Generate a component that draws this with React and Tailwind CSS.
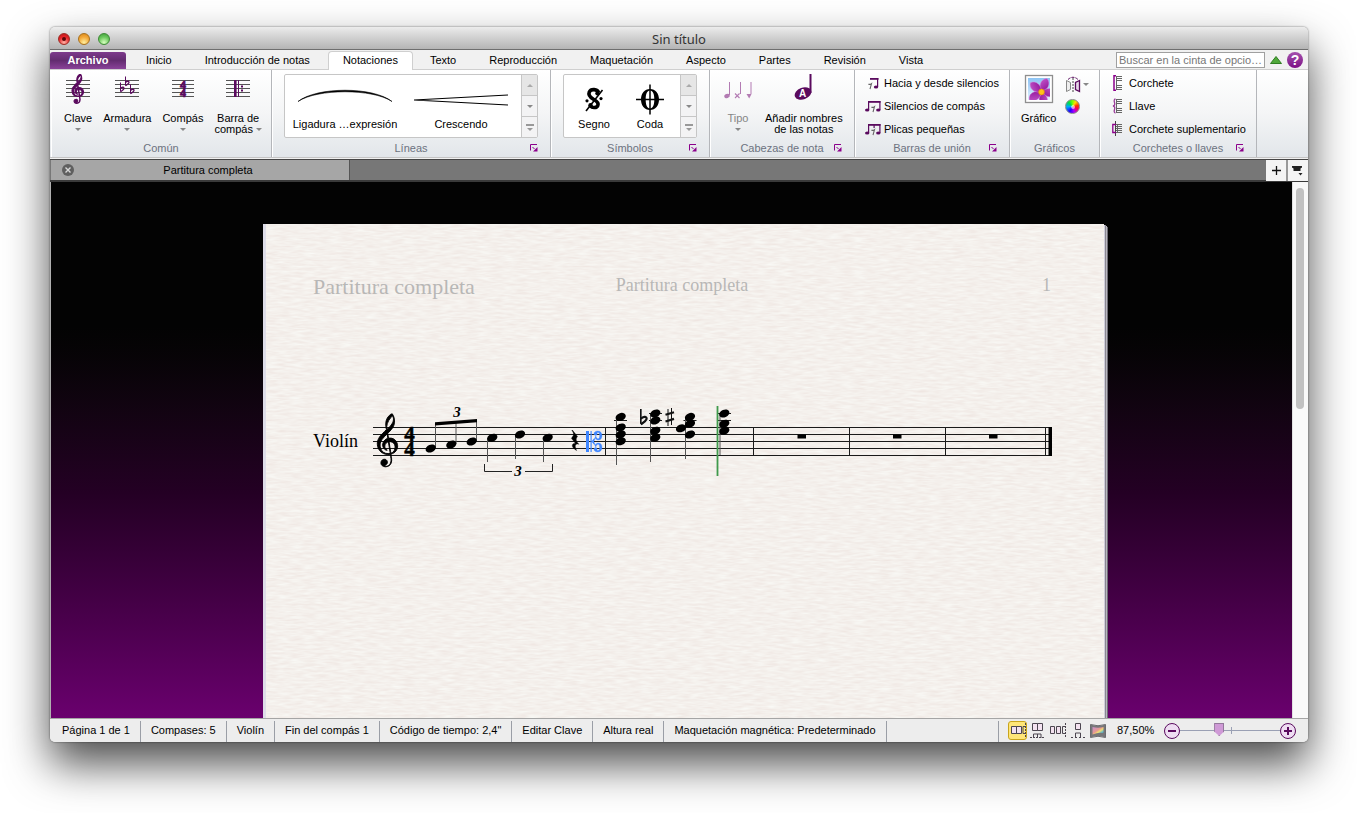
import React from "react";

const TREBLE =
  "m12.049 3.5296c0.305 3.1263-2.019 5.6563-4.0772 7.7014-0.9349 0.897-0.155 0.148-0.6437 0.594-0.1022-0.479-0.2986-1.731-0.2802-2.11 0.1304-2.6939 2.3198-6.5875 4.2381-8.0236 0.309 0.5767 0.563 0.6231 0.763 1.8382zm0.651 16.142c-1.232-0.906-2.85-1.144-4.3336-0.885-0.1913-1.255-0.3827-2.51-0.574-3.764 2.3506-2.329 4.9066-5.0322 5.0406-8.5394 0.059-2.232-0.276-4.6714-1.678-6.4836-1.7004 0.12823-2.8995 2.156-3.8019 3.4165-1.4889 2.6705-1.1414 5.9169-0.57 8.7965-0.8094 0.952-1.9296 1.743-2.7274 2.734-2.3561 2.308-4.4085 5.43-4.0046 8.878 0.18332 3.334 2.5894 6.434 5.8702 7.227 1.2457 0.315 2.5639 0.346 3.8241 0.099 0.2199 2.25 1.0266 4.629 0.0925 6.813-0.7007 1.598-2.7875 3.004-4.3325 2.192-0.5994-0.316-0.1137-0.051-0.478-0.252 1.0698-0.257 1.9996-1.036 2.26-1.565 0.8378-1.464-0.3998-3.639-2.1554-3.358-2.262 0.046-3.1904 3.14-1.7356 4.685 1.3468 1.52 3.833 1.312 5.4301 0.318 1.8125-1.18 2.0395-3.544 1.8325-5.562-0.07-0.678-0.403-2.67-0.444-3.387 0.697-0.249 0.209-0.059 1.193-0.449 2.66-1.053 4.357-4.259 3.594-7.122-0.318-1.469-1.044-2.914-2.302-3.792zm0.561 5.757c0.214 1.991-1.053 4.321-3.079 4.96-0.136-0.795-0.172-1.011-0.2626-1.475-0.4822-2.46-0.744-4.987-1.116-7.481 1.6246-0.168 3.4576 0.543 4.0226 2.184 0.244 0.577 0.343 1.197 0.435 1.812zm-5.1486 5.196c-2.5441 0.141-4.9995-1.595-5.6343-4.081-0.749-2.153-0.5283-4.63 0.8207-6.504 1.1151-1.702 2.6065-3.105 4.0286-4.543 0.183 1.127 0.366 2.254 0.549 3.382-2.9906 0.782-5.0046 4.725-3.215 7.451 0.5324 0.764 1.9765 2.223 2.7655 1.634-1.102-0.683-2.0033-1.859-1.8095-3.227-0.0821-1.282 1.3699-2.911 2.6513-3.198 0.4384 2.869 0.9413 6.073 1.3797 8.943-0.5054 0.1-1.0211 0.143-1.536 0.143z";

const SERIF = "'Liberation Serif', serif";
const PURPLE = "#5a0a5e";

/* ---------- ribbon icons ---------- */

function Staff({ w = 24 }) {
  return (
    <g stroke="#555" strokeWidth="1">
      {[6.5, 10.5, 14.5, 18.5, 22.5].map((y) => (
        <line key={y} x1="0" x2={w} y1={y} y2={y} />
      ))}
    </g>
  );
}

function ClefIcon() {
  return (
    <svg width="24" height="30" viewBox="0 0 24 30" aria-hidden="true">
      <Staff />
      <path d={TREBLE} transform="translate(6 0) scale(0.76 0.72)" fill={PURPLE} stroke={PURPLE} strokeWidth="1.4" />
    </svg>
  );
}

function Flat({ x, y, s = 1, fill = "none", color = PURPLE }) {
  return (
    <g transform={`translate(${x} ${y}) scale(${s})`} stroke={color} fill={fill}>
      <line x1="0.5" y1="0" x2="0.5" y2="9" strokeWidth="1" />
      <path d="M.5 6C2 4 4.6 4.6 3.9 6.3 3.4 7.6 1.8 8.4.5 9.3" strokeWidth="1.3" />
    </g>
  );
}

function KeyIcon() {
  return (
    <svg width="24" height="30" viewBox="0 0 24 30" aria-hidden="true">
      <Staff />
      <Flat x={5} y={8.5} />
      <Flat x={10} y={2.5} />
      <Flat x={15} y={10.5} />
    </svg>
  );
}

function MeterIcon() {
  return (
    <svg width="22" height="30" viewBox="0 0 22 30" aria-hidden="true">
      <Staff w={22} />
      <text fill={PURPLE} fontFamily={SERIF} fontWeight="bold" fontSize="12" textAnchor="middle" stroke={PURPLE} strokeWidth="0.7">
        <tspan x="11" y="14.5">4</tspan>
        <tspan x="11" y="22.5">4</tspan>
      </text>
    </svg>
  );
}

function BarIcon() {
  return (
    <svg width="24" height="30" viewBox="0 0 24 30" aria-hidden="true">
      <Staff />
      <rect x="8" y="6" width="2.600" height="17" fill={PURPLE} />
      <rect x="12" y="6" width="1" height="17" fill={PURPLE} />
      <rect x="15" y="11.5" width="2" height="2" fill={PURPLE} />
      <rect x="15" y="15.5" width="2" height="2" fill={PURPLE} />
    </svg>
  );
}

function NoteheadsIcon() {
  return (
    <svg width="30" height="30" viewBox="0 0 30 30" fill="#b37bb3" stroke="#b37bb3" aria-hidden="true">
      <ellipse cx="4" cy="22" rx="2.8" ry="2" stroke="none" transform="rotate(-20 4 22)" />
      <line x1="6.5" y1="8" x2="6.5" y2="21" />
      <path d="M12 19.500l4.500 4.500M16.500 19.500L12 24" strokeWidth="1.100" />
      <line x1="17.500" y1="8" x2="17.500" y2="20" />
      <path d="M23.500 20h5l-2.300 4.500z" stroke="none" />
      <line x1="28" y1="8" x2="28" y2="20" />
    </svg>
  );
}

function NameNoteIcon() {
  return (
    <svg width="20" height="30" viewBox="0 0 20 30" aria-hidden="true">
      <rect x="15.500" y="0" width="2" height="19" fill={PURPLE} />
      <ellipse cx="9" cy="19.500" rx="8.600" ry="5.800" fill={PURPLE} transform="rotate(-20 9 19.500)" />
      <text x="8.500" y="23" textAnchor="middle" fontSize="10" fontWeight="bold" fill="#fff" fontFamily="'Liberation Sans', sans-serif">A</text>
    </svg>
  );
}

function BeamIcon({ kind }) {
  return (
    <svg width="17" height="14" viewBox="0 0 17 14" aria-hidden="true">
      <g fill={PURPLE}>
        {kind === 0 && (
          <>
            <rect x="5" y="2" width="8.500" height="1.800" />
            <rect x="12" y="2" width="1.200" height="9" />
            <ellipse cx="11" cy="11" rx="2.200" ry="1.600" />
          </>
        )}
        {kind > 0 && (
          <>
            <rect x="3" y="2" width="12.500" height="1.800" />
            <rect x="3" y="2" width="1.200" height="9" />
            <ellipse cx="2.200" cy="11" rx="2.200" ry="1.600" />
            <rect x="14.300" y="2" width="1.200" height="9" />
            <ellipse cx="13.300" cy="11" rx="2.200" ry="1.600" />
            {kind === 2 && <rect x="8.500" y="3" width="1.200" height="3" />}
          </>
        )}
      </g>
      <path
        d={kind === 0 ? "M3.500 8q1.200 1 3-.3l-1.500 5.500" : "M6.500 8q1.200 1 3-.3l-1.500 5.500"}
        fill="none"
        stroke="#666"
        strokeWidth="1.100"
      />
    </svg>
  );
}

function FlowerIcon() {
  return (
    <svg width="30" height="30" viewBox="0 0 30 30" aria-hidden="true">
      <defs>
        <linearGradient id="sky" x1="0" y1="0" x2="0" y2="1">
          <stop offset="0" stopColor="#8cc4f4" />
          <stop offset="1" stopColor="#e3f1ff" />
        </linearGradient>
        <linearGradient id="petal" x1="0" y1="0" x2="1" y2="1">
          <stop offset="0" stopColor="#c45acb" />
          <stop offset="1" stopColor="#8d0d95" />
        </linearGradient>
        <clipPath id="photo"><rect x="4" y="4" width="22" height="22" /></clipPath>
      </defs>
      <rect x="1.500" y="1.500" width="27" height="27" fill="#fff" stroke="#8f8f8f" strokeWidth="1.300" />
      <rect x="4" y="4" width="22" height="22" fill="url(#sky)" />
      <g clipPath="url(#photo)">
        {[22, 94, 166, 238, 310].map((a) => (
          <path key={a} d="M17.500 18C12 13.500 12 6 17.500 3.500 23 6 23 13.500 17.500 18z" fill="url(#petal)" stroke="#d78adc" strokeWidth="0.400" transform={`rotate(${a} 17.500 18)`} />
        ))}
        <circle cx="17.500" cy="18" r="2.900" fill="#ffc21a" stroke="#e08a00" strokeWidth="0.600" />
      </g>
    </svg>
  );
}

function FlipIcon() {
  return (
    <svg width="16" height="17" viewBox="0 0 16 17" fill="none" aria-hidden="true">
      <path d="M3 3.500Q8-1 13 3.500" stroke={PURPLE} strokeDasharray="3 1" />
      <path d="M1.500 4.500l4 2v7l-4 2z" fill="#eee" stroke="#888" />
      <path d="M14.500 4.500l-4 2v7l4 2z" fill="#e8d8ea" stroke={PURPLE} strokeWidth="1.300" />
      <path d="M8 2v15" stroke="#444" strokeDasharray="2 1" />
    </svg>
  );
}

function WheelIcon() {
  return (
    <span className="flex size-[15px] rounded-full border border-[#888] bg-[conic-gradient(#7f0,#fd0_10%,#f30_22%,#f05_32%,#a0f_45%,#20f_58%,#0af_74%,#0d4_88%,#7f0)]">
      <span className="m-auto size-[4px] rounded-full bg-white/60" />
    </span>
  );
}

function BracketIcon({ kind }) {
  const lines = kind === 2 ? [3.5, 5.5, 7.5, 9.5, 11.5] : [1.500, 3.500, 5.500, 10.500, 12.500, 14.500];
  return (
    <svg width="12" height="16" viewBox="0 0 12 16" fill="none" aria-hidden="true">
      <g stroke="#666">
        {lines.map((y) => <path key={y} d={`M4 ${y}h6`} />)}
        <path d={kind === 2 ? "M5.500 3v9" : "M4.500 1v14"} />
      </g>
      {kind === 0 && <path d="M4 .800H2v14.400h2" stroke="#8b008b" strokeWidth="1.500" />}
      {kind === 1 && <path d="M3.500 1q-2 .500-1 3.500t-1.500 3.500q2.500 .500 1.500 3.500t1 3.500" stroke="#9a3c9a" strokeWidth="1.300" />}
      {kind === 2 && (
        <>
          <path d="M3.500 0v15" stroke="#444" />
          <path d="M4 3.500H.800v8H4" stroke="#8b008b" strokeWidth="1.300" />
        </>
      )}
    </svg>
  );
}

function Caret() {
  return <span className="inline-block border-x-[3px] border-t-[3px] border-x-transparent border-t-[#888]" />;
}

/* ---------- ribbon pieces ---------- */

function Group({ label, width, launcher, children }) {
  return (
    <section aria-label={label} className={`flex flex-col border-r border-[#b4b6ba] shadow-[inset_1px_0_0_#fff] ${width}`}>
      <div className="flex h-[71px] pt-1">{children}</div>
      <div className="grid grid-cols-[24px_1fr_24px] items-center leading-[14px] text-[#6c7280]">
        <span />
        <span className="text-center whitespace-nowrap">{label}</span>
        {launcher && (
          <button aria-label={`Opciones de ${label}`} className="pl-1">
            <svg width="8" height="8" viewBox="0 0 8 8" aria-hidden="true">
              <path d="M.500 6.500V.500H7" fill="none" stroke="#8b008b" />
              <path d="M2.500 3l2 2" stroke="#8b008b" />
              <path d="M7.500 3v4.500H3z" fill="#8b008b" />
            </svg>
          </button>
        )}
      </div>
    </section>
  );
}

function BigButton({ icon, lines, caret, className = "" }) {
  return (
    <button className={`flex flex-col items-center leading-[11px] whitespace-nowrap ${className}`}>
      <span className="flex h-[39px]">{icon}</span>
      {lines.map((l, i) => (
        <span key={l} className="flex items-center gap-[3px]">
          {l}
          {caret === "inline" && i === lines.length - 1 && <Caret />}
        </span>
      ))}
      {caret === "below" && <span className="flex h-[11px] items-center"><Caret /></span>}
    </button>
  );
}

function Gallery({ items }) {
  return (
    <div className="mx-3 flex h-[64px] flex-1 rounded-[2px] border border-[#c6c6c6] bg-white">
      <div className="flex flex-1 px-[2px]">
        {items.map(([name, art]) => (
          <button key={name} className="flex flex-1 flex-col items-center whitespace-nowrap">
            <span className="flex h-[42px] items-end">{art}</span>
            <span className="leading-[14px]">{name}</span>
          </button>
        ))}
      </div>
      <div className="flex w-[16px] flex-col divide-y divide-[#c6c6c6] border-l border-[#c6c6c6] bg-[#f3f3f4]">
        <button aria-label="Subir" className="flex flex-1 items-center justify-center bg-[#e6e6e6]">
          <span className="border-x-[3px] border-b-[3px] border-x-transparent border-b-[#aaa]" />
        </button>
        <button aria-label="Bajar" className="flex flex-1 items-center justify-center"><Caret /></button>
        <button aria-label="Más" className="flex flex-1 flex-col items-center justify-center gap-[2px]">
          <span className="h-[2px] w-2 bg-[#999]" />
          <span className="border-x-[3px] border-t-[3px] border-x-transparent border-t-[#999]" />
        </button>
      </div>
    </div>
  );
}

function ListButtons({ items, className }) {
  return (
    <div className={`flex flex-col gap-[5px] ${className}`}>
      {items.map(([name, icon]) => (
        <button key={name} className="flex h-[18px] items-center whitespace-nowrap">
          {icon}
          <span>{name}</span>
        </button>
      ))}
    </div>
  );
}

const slur = (
  <svg width="96" height="42" viewBox="0 0 96 42" aria-hidden="true">
    <path d="M1 26.500C20 11.500 76 11.500 95 26.500 76 13.500 20 13.500 1 26.500z" fill="#000" stroke="#000" strokeWidth="0.600" />
  </svg>
);
const hairpin = (
  <svg width="96" height="42" viewBox="0 0 96 42" aria-hidden="true">
    <path d="M95 20L1 25l94 5" fill="none" stroke="#000" strokeWidth="1.100" />
  </svg>
);
const segno = (
  <svg width="20" height="42" viewBox="0 0 20 42" aria-hidden="true">
    <path d="M14.500 17.500C13.500 14 7 13.500 5.300 17c-1.500 3.500 1 5.500 4.500 7.500 3.500 1.900 5 3.700 4 6-1 2.500-5.500 2.800-7.300.500" fill="none" stroke="#000" strokeWidth="3.600" />
    <circle cx="13.500" cy="18.300" r="2.200" />
    <circle cx="6.500" cy="30.200" r="2.200" />
    <path d="M18.500 15L2 36" stroke="#000" strokeWidth="1.600" />
    <circle cx="3" cy="25.800" r="1.600" />
    <circle cx="17" cy="23.600" r="1.600" />
  </svg>
);
const coda = (
  <svg width="28" height="42" viewBox="0 0 28 42" aria-hidden="true">
    <path fillRule="evenodd" d="M14 14c5.500 0 9 4.500 9 10.500S19.500 35 14 35s-9-4.500-9-10.500S8.500 14 14 14zm0 1.500c-3 0-4.300 3.500-4.300 9s1.300 9 4.300 9 4.300-3.500 4.300-9-1.300-9-4.300-9z" />
    <path d="M14 9.500v30M0 24.500h28" stroke="#000" strokeWidth="1.500" />
  </svg>
);

/* ---------- score ---------- */

const NOTES = [
  [430.7, 448.5], [451.3, 444.5], [471.7, 441.5], [492.3, 437.7], [520, 434.5], [547.7, 437.7],
  [620.7, 416.9], [620.7, 427.5], [620.7, 434.5], [620.7, 441.3],
  [655.3, 413.5], [655.3, 420.5], [655.3, 430.7], [655.3, 437.7],
  [690, 416.9], [690, 423.7], [681, 428.3], [690, 434.5],
  [724.3, 413.5], [724.3, 423.7], [724.3, 430.7],
];
const STEMS = [
  [435.5, 448, 424], [456, 444, 422], [476.5, 441, 420],
  [487.5, 438, 462], [515.5, 435, 459], [543.5, 438, 462],
  [616.5, 417, 465], [650.5, 414, 462], [685.5, 417, 459], [720, 414, 455],
];
const LEDGERS = [[620.5, 420.5], [655.5, 420.5], [655.5, 413.5], [690, 420.5], [724.5, 420.5], [724.5, 413.5]];

function CClefHalf() {
  return (
    <path
      d="M593 441.500C594.500 441 595 439.500 595.200 438c.800 1.500 2 2 3.200 2 2.600 0 3.600-2 3.600-4.500s-1.500-4.500-4.300-4.500c-2 0-3.700 1-3.700 2.700 0 1.200.800 1.700 1.600 1.700 1 0 1.500-.700 1.400-1.600-.100-.700.300-1.300 1-1.300 1.300 0 1.600 1.200 1.600 3s-.300 3.200-1.500 3.200c-1.300 0-1.900-1.200-2.200-2.900z"
      fill="#3f86ff"
      stroke="#3f86ff"
      strokeWidth="0.300"
    />
  );
}

function Score() {
  return (
    <svg width="690" height="80" viewBox="370 400 690 80" role="img" aria-label="Pentagrama de violín">
      <g stroke="#1a1a1a" strokeWidth="1">
        {[427.5, 434.5, 441.5, 448.5, 455.5].map((y) => <line key={y} x1="373" x2="1052" y1={y} y2={y} />)}
        {[605.5, 753.5, 849.5, 945.5, 1045.5].map((x) => <line key={x} x1={x} x2={x} y1="427" y2="456" />)}
        {LEDGERS.map(([x, y]) => <line key={`${x}-${y}`} x1={x - 6.5} x2={x + 6.5} y1={y} y2={y} />)}
      </g>
      <g stroke="#555" strokeWidth="1">
        {STEMS.map(([x, a, b]) => <line key={x} x1={x} x2={x} y1={a} y2={b} />)}
      </g>
      <rect x="1048.500" y="427" width="3.500" height="29" />
      {[797.5, 893, 989].map((x) => <rect key={x} x={x} y="434.500" width="8.500" height="4" />)}
      <path d={TREBLE} transform="translate(377.300 413.800) scale(1.340 1.300)" stroke="#000" strokeWidth="0.700" />
      <text fontFamily={SERIF} fontWeight="bold" fontSize="21" textAnchor="middle" stroke="#000" strokeWidth="0.500">
        <tspan x="409.500" y="441">4</tspan>
        <tspan x="409.500" y="455.500">4</tspan>
      </text>
      {NOTES.map(([x, y]) => (
        <ellipse key={`${x}-${y}`} cx={x} cy={y} rx="5.300" ry="3.800" transform={`rotate(-22 ${x} ${y})`} />
      ))}
      <polygon points="435,422.300 477,419 477,422.300 435,425.600" />
      <g fontFamily={SERIF} fontWeight="bold" fontStyle="italic" fontSize="15" textAnchor="middle">
        <text x="457" y="417">3</text>
        <text x="518" y="476">3</text>
      </g>
      <path d="M484.500 464v7.500H512M525 471.500h27.500V464" fill="none" stroke="#222" />
      <path d="M572.300 430l5.200 6.500c-2.300 2.700-1.300 4.700 1.400 7.800-3.200-1.200-5 1-2.300 6.200-5.600-3.200-5.400-7.300-1.200-7.300l-4-5c2.800-3 2.800-4.700.5-7.600z" stroke="#000" strokeWidth="0.400" />
      <g>
        <rect x="586" y="431" width="3" height="21" fill="#3f86ff" />
        <rect x="590.500" y="431" width="1.200" height="21" fill="#3f86ff" />
        <path d="M591.500 441.500l2.500-3v6z" fill="#3f86ff" />
        <CClefHalf />
        <g transform="translate(0 883) scale(1 -1)"><CClefHalf /></g>
      </g>
      <Flat x={640} y={409} s={1.65} color="#111" />
      <g stroke="#111">
        <path d="M668 409v17M671.500 408v17" strokeWidth="1" />
        <path d="M665.500 414.800l8.500-2.600M665.500 421.500l8.500-2.600" strokeWidth="2.200" />
      </g>
      <line x1="717.500" x2="717.500" y1="406" y2="476" stroke="#3f9a4c" strokeWidth="1.800" />
    </svg>
  );
}

function PaperTexture() {
  return (
    <svg className="absolute inset-0 size-full" aria-hidden="true">
      <filter id="paper" x="0" y="0" width="100%" height="100%" colorInterpolationFilters="sRGB">
        <feTurbulence type="fractalNoise" baseFrequency="0.08 0.45" numOctaves="2" seed="7" />
        <feColorMatrix values="0.050 0 0 0 0.932  0.095 0 0 0 0.893  0.100 0 0 0 0.875  0 0 0 0 1" />
      </filter>
      <rect width="100%" height="100%" filter="url(#paper)" />
    </svg>
  );
}

/* ---------- status bar ---------- */

const STATUS = [
  "Página 1 de 1", "Compases: 5", "Violín", "Fin del compás 1", 'Código de tiempo: 2,4"',
  "Editar Clave", "Altura real", "Maquetación magnética: Predeterminado",
];

const VIEWS = [
  ["Panorama de páginas", <><path d="M2.500 4.500h5v7h-5zM7.500 4.500h5v7h-5z" fill="#f3e2f0" /><path d="M16 4.500h-2v7h2" /><path d="M16.500 1v14" strokeDasharray="2 1" /></>],
  ["Páginas verticales", <><path d="M3.500 1.500h5v7h-5zM8.500 1.500h5v7h-5z" fill="#f3e2f0" /><path d="M4.500 16v-4h7.500v4M8.500 12v4" /><path d="M1 15.500h15" strokeDasharray="2 1" /></>],
  ["Páginas horizontales", <><path d="M1.500 4.500h4v7h-4zM7.500 4.500h4v7h-4z" fill="#f3e2f0" /><path d="M16 4.500h-2.500v7H16" /><path d="M16.500 1v14" strokeDasharray="2 1" /></>],
  ["Página única", <><path d="M6.500 1.500h5v6h-5z" fill="#f3e2f0" /><path d="M6.500 15v-4h5v4" /><path d="M2 15.500h14" strokeDasharray="2 2" /></>],
];

function StatusBar() {
  return (
    <footer className="flex h-6 items-stretch border-t border-[#a5a5a5] bg-[#ededed] pl-[2px]">
      {STATUS.map((s) => (
        <span key={s} className="mt-[2px] border-r border-[#9a9ea6] px-[10px] leading-[18px] whitespace-nowrap">{s}</span>
      ))}
      <div className="mt-[2px] ml-auto flex items-start border-l border-[#9a9ea6] pr-3 pl-[9px]">
        {VIEWS.map(([name, art], i) => (
          <button
            key={name}
            aria-label={name}
            className={
              i === 0
                ? "mr-[2px] flex h-[19px] w-[19px] items-center justify-center rounded-[3px] border border-[#c9a51c] bg-[#ffe678]"
                : "mr-[2px] flex h-[19px] w-[18px] items-center justify-center"
            }
          >
            <svg width="18" height="17" viewBox="0 0 18 17" fill="none" stroke="#4c4650" aria-hidden="true" className="shrink-0">{art}</svg>
          </button>
        ))}
        <button aria-label="Panorama" className="flex h-[19px] w-[18px] items-center justify-center">
          <svg width="16" height="14" viewBox="0 0 16 14" aria-hidden="true">
            <defs>
              <linearGradient id="pano" x1="0" x2="1" y1="0" y2="1">
                <stop offset="0" stopColor="#c58fd0" /><stop offset="0.45" stopColor="#e89a90" />
                <stop offset="0.6" stopColor="#f2dc70" /><stop offset="0.8" stopColor="#62bcd0" /><stop offset="1" stopColor="#555" />
              </linearGradient>
            </defs>
            <path d="M.500 .500Q8 3 15.500 .500v13Q8 11 .500 13.500z" fill="#77777a" stroke="#6c6c70" />
            <path d="M2.500 3Q8 4.500 13.500 3v6q-5 -1 -11 1.500z" fill="url(#pano)" />
          </svg>
        </button>
        <span className="ml-[10px] w-[47px] leading-[18px]">87,50%</span>
        <div className="flex h-[19px] items-center">
          <button aria-label="Reducir" className="flex size-4 items-center justify-center rounded-full border border-[#5a0a5e] bg-[#eeddf2]">
            <span className="h-[2px] w-2 bg-[#5a0a5e]" />
          </button>
          <div className="relative flex w-[100px] items-center">
            <span className="absolute left-[51px] h-[7px] w-px bg-[#9aa0b4]" />
            <input
              type="range"
              min="0"
              max="100"
              defaultValue="38"
              aria-label="Zoom"
              className="relative h-4 w-full appearance-none bg-transparent [&::-webkit-slider-runnable-track]:h-px [&::-webkit-slider-runnable-track]:bg-[#9aa0b4] [&::-webkit-slider-thumb]:-mt-[7px] [&::-webkit-slider-thumb]:h-[13px] [&::-webkit-slider-thumb]:w-[10px] [&::-webkit-slider-thumb]:appearance-none [&::-webkit-slider-thumb]:border [&::-webkit-slider-thumb]:border-[#94789c] [&::-webkit-slider-thumb]:bg-[#cf9ad6] [&::-webkit-slider-thumb]:[clip-path:polygon(0_0,100%_0,100%_65%,50%_100%,0_65%)]"
            />
          </div>
          <button aria-label="Ampliar" className="grid size-4 place-items-center rounded-full border border-[#5a0a5e] bg-[#eeddf2]">
            <span className="col-start-1 row-start-1 h-[2px] w-2 bg-[#5a0a5e]" />
            <span className="col-start-1 row-start-1 h-2 w-[2px] bg-[#5a0a5e]" />
          </button>
        </div>
      </div>
    </footer>
  );
}

/* ---------- window ---------- */

const TABS = ["Inicio", "Introducción de notas", "Notaciones", "Texto", "Reproducción", "Maquetación", "Aspecto", "Partes", "Revisión", "Vista"];

const LIGHTS = [
  ["Cerrar", "border-[#9c2a22] bg-[radial-gradient(circle_at_50%_85%,#ffb4a8,#e8262a_55%,#b81217)]"],
  ["Minimizar", "border-[#a8701c] bg-[radial-gradient(circle_at_50%_85%,#fff0a0,#f3a93a_55%,#d98414)]"],
  ["Zoom", "border-[#3d8a35] bg-[radial-gradient(circle_at_50%_85%,#d8ffc0,#6cc95e_55%,#3c9a38)]"],
];

export default function App() {
  return (
    <div className="flex h-screen flex-col overflow-hidden bg-white pt-[27px] pr-[49px] pb-[71px] pl-[50px] font-['Liberation_Sans',sans-serif] text-[11px] text-black">
      <div className="flex min-h-0 flex-1 flex-col overflow-hidden rounded-[5px] bg-[#f0f0f0] shadow-[0_22px_44px_rgba(0,0,0,0.7),0_0_2px_rgba(0,0,0,0.6)]">
        <header className="grid h-[23px] shrink-0 grid-cols-3 items-center border-b border-[#6e6e6e] bg-linear-to-b from-[#ececec] to-[#b4b4b4]">
          <div className="flex gap-2 pt-px pl-2">
            {LIGHTS.map(([name, look], i) => (
              <button key={name} aria-label={name} className={`flex size-3 items-center justify-center rounded-full border ${look}`}>
                {i === 0 && <span className="size-1 rounded-full bg-[#5a0508]" />}
              </button>
            ))}
          </div>
          <h1 className="pt-px text-center font-['Noto_Sans',sans-serif] text-[13px] leading-[22px] text-[#333]">Sin título</h1>
        </header>

        <nav className="flex h-5 shrink-0 items-stretch border-b border-[#cfcfcf] bg-[#f1f1f1]">
          <button className="mt-[2px] mr-1 w-[76px] rounded-t-[3px] bg-linear-to-b from-[#7d3a8c] via-[#632c70] to-[#8a4399] font-bold text-white">Archivo</button>
          {TABS.map((t) => (
            <button
              key={t}
              className={
                t === "Notaciones"
                  ? "mx-px mt-px -mb-px rounded-t-[4px] border border-b-0 border-[#cfcfcf] bg-white px-[14px] pb-px"
                  : "px-4 pt-px mr-px whitespace-nowrap"
              }
            >
              {t}
            </button>
          ))}
          <div className="ml-auto flex items-center pr-[5px]">
            <input
              aria-label="Buscar en la cinta"
              placeholder="Buscar en la cinta de opcio…"
              className="h-4 w-[149px] border border-[#a0a0a0] bg-white px-[2px] pt-px text-[11px] leading-[13px] placeholder:text-[#777]"
            />
            <button aria-label="Contraer cinta" className="mx-[5px]">
              <svg width="12" height="8" viewBox="0 0 12 8" aria-hidden="true"><path d="M6 .500L11.500 7.500H.500z" fill="#4fa83a" stroke="#2f7d22" /></svg>
            </button>
            <button aria-label="Ayuda" className="size-4 rounded-full bg-linear-to-b from-[#a44fae] to-[#7d0a86] text-[14px] leading-4 font-bold text-white">?</button>
          </div>
        </nav>

        <div className="flex h-[88px] shrink-0 border-b border-[#c4c4c4] bg-linear-to-b from-white via-[#f4f5f6] to-[#e2e6ea] pl-px">
          <Group label="Común" width="w-[221px]">
            <div className="flex items-start gap-[11px] pl-[13px]">
              <BigButton icon={<ClefIcon />} lines={["Clave"]} caret="below" />
              <BigButton icon={<KeyIcon />} lines={["Armadura"]} caret="below" />
              <BigButton icon={<MeterIcon />} lines={["Compás"]} caret="below" />
              <BigButton icon={<BarIcon />} lines={["Barra de", "compás"]} caret="inline" />
            </div>
          </Group>
          <Group label="Líneas" width="w-[279px]" launcher>
            <Gallery items={[["Ligadura …expresión", slur], ["Crescendo", hairpin]]} />
          </Group>
          <Group label="Símbolos" width="w-[159px]" launcher>
            <Gallery items={[["Segno", segno], ["Coda", coda]]} />
          </Group>
          <Group label="Cabezas de nota" width="w-[145px]" launcher>
            <div className="flex items-start gap-3 pl-[13px]">
              <BigButton icon={<NoteheadsIcon />} lines={["Tipo"]} caret="below" className="text-[#858585]" />
              <BigButton icon={<NameNoteIcon />} lines={["Añadir nombres", "de las notas"]} />
            </div>
          </Group>
          <Group label="Barras de unión" width="w-[155px]" launcher>
            <ListButtons
              className="pl-[10px]"
              items={[
                ["Hacia y desde silencios", <span className="w-[19px]"><BeamIcon kind={0} /></span>],
                ["Silencios de compás", <span className="w-[19px]"><BeamIcon kind={1} /></span>],
                ["Plicas pequeñas", <span className="w-[19px]"><BeamIcon kind={2} /></span>],
              ]}
            />
          </Group>
          <Group label="Gráficos" width="w-[90px]">
            <div className="flex items-start gap-[9px] pl-[11px]">
              <BigButton icon={<FlowerIcon />} lines={["Gráfico"]} />
              <div className="flex flex-col gap-[6px] pt-[2px]">
                <button aria-label="Voltear" className="flex items-center gap-[2px]"><FlipIcon /><Caret /></button>
                <button aria-label="Color"><WheelIcon /></button>
              </div>
            </div>
          </Group>
          <Group label="Corchetes o llaves" width="w-[157px]" launcher>
            <ListButtons
              className="pl-3"
              items={[
                ["Corchete", <span className="w-[17px]"><BracketIcon kind={0} /></span>],
                ["Llave", <span className="w-[17px]"><BracketIcon kind={1} /></span>],
                ["Corchete suplementario", <span className="w-[17px]"><BracketIcon kind={2} /></span>],
              ]}
            />
          </Group>
        </div>

        <div className="mt-px flex h-[23px] shrink-0 items-stretch border-t border-b-2 border-t-[#444] border-b-[#3a3a3a] bg-[#777] pl-px">
          <div className="flex w-[299px] items-center border-r border-[#555] bg-[#a6a6a6] pr-[7px] pb-px pl-[11px]">
            <button aria-label="Cerrar pestaña">
              <svg width="12" height="12" viewBox="0 0 12 12" aria-hidden="true">
                <circle cx="6" cy="6" r="6" fill="#5f5f5f" />
                <path d="M3.500 3.500l5 5M8.500 3.500l-5 5" stroke="#d8d8d8" strokeWidth="1.400" />
              </svg>
            </button>
            <span className="flex-1 text-center leading-4">Partitura completa</span>
          </div>
          <div className="-mb-px ml-auto flex gap-[2px] bg-[#999]">
            <button aria-label="Nueva pestaña" className="flex w-5 items-center justify-center bg-[#f4f4f4]">
              <svg width="9" height="9" viewBox="0 0 9 9" aria-hidden="true"><path d="M4.500 0v9M0 4.500h9" stroke="#111" strokeWidth="1.300" /></svg>
            </button>
            <button aria-label="Lista de pestañas" className="flex w-5 items-center justify-center bg-[#f4f4f4]">
              <svg width="12" height="10" viewBox="0 0 12 10" aria-hidden="true"><path d="M0 0h10v1.500L8.500 2.500V5h-7V2.500L0 1.500zM6.500 7h4L8.500 9.500z" fill="#222" /></svg>
            </button>
          </div>
        </div>

        <div className="flex min-h-0 flex-1 bg-[#b0b0b0] pl-px">
          <main className="flex flex-1 justify-center overflow-hidden bg-linear-to-b from-[#030303] from-27% via-[#240024] via-58% to-[#6a006e] to-100% pt-[42px] pl-[28px]">
            <article className="relative h-full w-[841px] border-l-[3px] border-[#dedde8] bg-[#f4f0ed]">
              <PaperTexture />
              <div className="relative">
                <div className="grid grid-cols-3 pt-[49px] pr-[53px] pl-[47px] font-['Liberation_Serif',serif] text-[#b8b7b6]">
                  <p className="text-[22px] leading-[28px]">Partitura completa</p>
                  <p className="text-center text-[18px] leading-[24px]">Partitura completa</p>
                  <p className="text-right text-[18px] leading-[24px]">1</p>
                </div>
                <div className="mt-[99px] flex items-center pl-[47px] font-['Liberation_Serif',serif] text-[18px]">
                  <span className="w-[57px] shrink-0 pt-[2px]">Violín</span>
                  <Score />
                </div>
              </div>
            </article>
            <div className="mt-px flex w-1 shrink-0">
              <span className="w-px bg-[#d0cedb]" />
              <span className="w-px bg-[#8a8790]" />
              <span className="mt-px w-px bg-[#b9b7c0]" />
              <span className="mt-[2px] w-px bg-[#6f6c75]" />
            </div>
          </main>
          <div className="w-4 border-l border-[#e2e2e2] bg-[#f9f9f9] px-[3px] pt-[6px]">
            <div className="h-[221px] w-2 rounded-full bg-[#c1c1c1]" />
          </div>
        </div>

        <StatusBar />
      </div>
    </div>
  );
}
